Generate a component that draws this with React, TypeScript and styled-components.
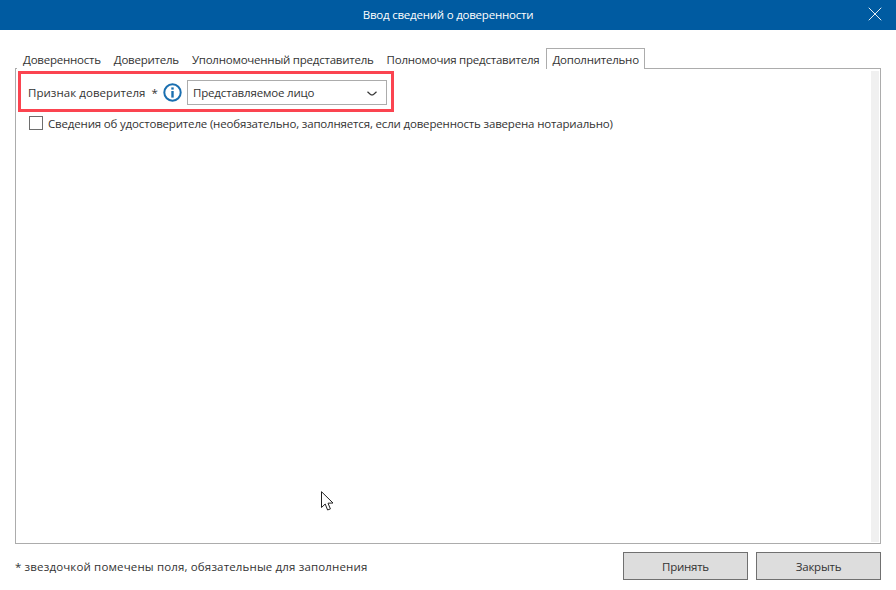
import React from 'react'
import styled, { createGlobalStyle } from 'styled-components'
import { X } from 'lucide-react'

const GlobalStyle = createGlobalStyle`
  html, body {
    margin: 0;
    padding: 0;
    background: #fff;
  }
  body {
    font-family: 'Open Sans', 'Noto Sans', sans-serif;
    font-size: 11.5px;
    letter-spacing: -0.17px;
    color: #333;
  }
  * {
    box-sizing: border-box;
  }
`

const Window = styled.div`
  position: relative;
  display: flex;
  flex-direction: column;
  width: 896px;
  height: 590px;
  overflow: hidden;
`

const TitleBar = styled.header`
  position: relative;
  display: flex;
  align-items: center;
  justify-content: center;
  flex: none;
  height: 30px;
  padding-bottom: 1px;
  background: #005ba1;
  color: #fff;
  letter-spacing: -0.22px;
`

const CloseButton = styled.button`
  position: absolute;
  top: 2px;
  right: 9px;
  display: flex;
  padding: 0;
  border: 0;
  background: none;
  color: #e6eff6;
`

const Body = styled.main`
  display: flex;
  flex: 1;
  flex-direction: column;
  padding: 18px 15px 0;
`

const TabBar = styled.nav`
  display: flex;
  flex: none;
  height: 21px;
  padding-left: 1.5px;
`

const Tab = styled.div<{ $active?: boolean }>`
  position: relative;
  height: 21px;
  padding: 3px 5.5px 0;
  line-height: 16px;
  letter-spacing: -0.23px;
  white-space: nowrap;
  border: 1px solid ${p => (p.$active ? '#acacac' : 'transparent')};
  border-bottom: 0;
  background: #fff;
  z-index: 1;
`

const Panel = styled.section`
  position: relative;
  flex: none;
  height: 476px;
  margin-top: -1px;
  padding: 2px 9px 0 2px;
  border: 1px solid #acacac;
`

const Scrollbar = styled.div`
  position: absolute;
  top: 2px;
  right: 1px;
  bottom: 1px;
  width: 8px;
  background: #f0f0f0;
`

const FieldRow = styled.div`
  display: flex;
  align-items: center;
  width: 376px;
  height: 41px;
  padding: 1px 0 0 7px;
  border: 3px solid #fb4450;
`

const FieldLabel = styled.label`
  width: 135px;
  letter-spacing: 0.05px;
  white-space: nowrap;
`

const InfoIcon = styled.svg`
  flex: none;
  width: 19px;
  height: 19px;
  margin-right: 5px;
`

const Select = styled.div`
  display: flex;
  align-items: center;
  justify-content: space-between;
  width: 200px;
  height: 25px;
  padding: 0 9px 0 5px;
  border: 1px solid #acacac;
  background: #fff;
`

const Chevron = styled.svg`
  width: 10px;
  height: 5px;
  margin-top: 2px;
`

const CheckRow = styled.label`
  display: flex;
  align-items: center;
  gap: 5px;
  height: 16px;
  margin: 3px 0 0 11px;
`

const CheckBox = styled.span`
  flex: none;
  width: 14px;
  height: 14px;
  border: 1px solid #6e6e6e;
  background: #fff;
`

const Footer = styled.footer`
  display: flex;
  align-items: center;
  justify-content: space-between;
  margin-top: 8px;
`

const Note = styled.span`
  letter-spacing: 0.15px;
`

const Actions = styled.div`
  display: flex;
  gap: 8px;
`

const ActionButton = styled.button`
  width: 125px;
  height: 28px;
  padding: 0;
  border: 1px solid #707070;
  background: #dddddd;
  color: #333;
  font: inherit;
  letter-spacing: -0.25px;
`

const Pointer = styled.svg`
  position: absolute;
  left: 321px;
  top: 491px;
  width: 13px;
  height: 21px;
`

const tabs = [
  'Доверенность',
  'Доверитель',
  'Уполномоченный представитель',
  'Полномочия представителя',
]

export default function App() {
  return (
    <Window>
      <GlobalStyle />
      <TitleBar>
        Ввод сведений о доверенности
        <CloseButton aria-label="Закрыть">
          <X size={24} strokeWidth={1} absoluteStrokeWidth />
        </CloseButton>
      </TitleBar>
      <Body>
        <TabBar>
          {tabs.map(t => (
            <Tab key={t}>{t}</Tab>
          ))}
          <Tab $active>Дополнительно</Tab>
        </TabBar>
        <Panel>
          <Scrollbar />
          <FieldRow>
            <FieldLabel>Признак доверителя&nbsp; *</FieldLabel>
            <InfoIcon viewBox="0 0 19 19">
              <circle cx="9.5" cy="9.5" r="8.2" fill="none" stroke="#1a6fb0" strokeWidth="2" />
              <rect x="8.3" y="8" width="2.4" height="6.6" fill="#1a6fb0" />
              <rect x="8.3" y="4.4" width="2.4" height="2.2" fill="#1a6fb0" />
            </InfoIcon>
            <Select>
              Представляемое лицо
              <Chevron viewBox="0 0 10 5">
                <path d="M0.5 0.7 L3.5 3.4 Q5 4.3 6.5 3.4 L9.5 0.7" fill="none" stroke="#333" strokeWidth="1.2" />
              </Chevron>
            </Select>
          </FieldRow>
          <CheckRow>
            <CheckBox />
            Сведения об удостоверителе (необязательно, заполняется, если доверенность заверена нотариально)
          </CheckRow>
        </Panel>
        <Footer>
          <Note>* звездочкой помечены поля, обязательные для заполнения</Note>
          <Actions>
            <ActionButton>Принять</ActionButton>
            <ActionButton>Закрыть</ActionButton>
          </Actions>
        </Footer>
      </Body>
      <Pointer viewBox="0 0 13 21">
        <path
          d="M0.5 0.7 L0.5 16.5 L4.2 13 L6.6 19 L9.4 17.9 L7 12.2 L12 12 Z"
          fill="#fff"
          stroke="#222"
          strokeWidth="1"
        />
      </Pointer>
    </Window>
  )
}
